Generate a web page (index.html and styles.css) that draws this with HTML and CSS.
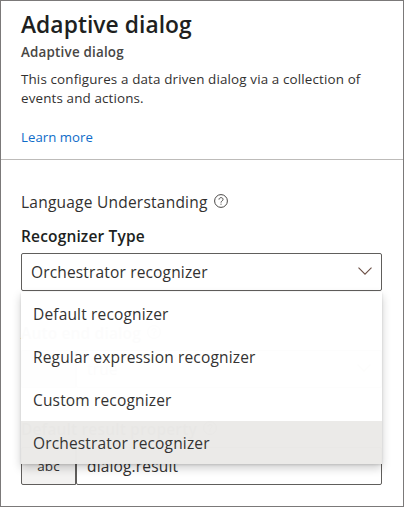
FILE: index.html
```html
<!DOCTYPE html>
<html lang="en">
<head>
<meta charset="utf-8">
<title>Adaptive dialog</title>
<link rel="stylesheet" href="styles.css">
</head>
<body>
<main class="panel">
  <header class="intro">
    <h1 class="title">Adaptive dialog</h1>
    <p class="subtitle">Adaptive dialog</p>
    <p class="description">This configures a data driven dialog via a collection of<br>events and actions.</p>
    <a class="link">Learn more</a>
  </header>
  <section class="form">
    <div class="group-label"><span>Language Understanding</span>
      <svg class="help" viewBox="0 0 14 14"><circle cx="7" cy="7" r="6.4"/><path d="M5 5.6C5 3 9 3 9 5.4C9 7 7 6.9 7 8.6M7 9.7V10.7"/></svg>
    </div>
    <div class="field-label"><span>Recognizer Type</span></div>
    <div class="select-wrap">
      <div class="select"><span>Orchestrator recognizer</span>
        <svg class="chevron" viewBox="0 0 14 8"><path d="M.5 .6L7 7.1L13.5 .6"/></svg>
      </div>
      <ul class="menu">
        <li>Default recognizer</li>
        <li>Regular expression recognizer</li>
        <li>Custom recognizer</li>
        <li class="selected">Orchestrator recognizer</li>
      </ul>
    </div>
    <div class="field-label covered"><span>Auto end dialog</span>
      <svg class="help" viewBox="0 0 14 14"><circle cx="7" cy="7" r="6.4"/><path d="M5 5.6C5 3 9 3 9 5.4C9 7 7 6.9 7 8.6M7 9.7V10.7"/></svg>
    </div>
    <div class="input-row">
      <div class="type"></div>
      <div class="value"><span>true</span>
        <svg class="chevron" viewBox="0 0 14 8"><path d="M.5 .6L7 7.1L13.5 .6"/></svg>
      </div>
    </div>
    <div class="field-label covered"><span>Default result property</span>
      <svg class="help" viewBox="0 0 14 14"><circle cx="7" cy="7" r="6.4"/><path d="M5 5.6C5 3 9 3 9 5.4C9 7 7 6.9 7 8.6M7 9.7V10.7"/></svg>
    </div>
    <div class="input-row last">
      <div class="type">abc</div>
      <div class="value"><span>dialog.result</span></div>
    </div>
  </section>
</main>
</body>
</html>
```
FILE: styles.css
```css
* { box-sizing: border-box; }
body {
  margin: 0;
  background: #fff;
  color: #323130;
  font-family: "Open Sans", "Noto Sans", sans-serif;
  font-size: 15.5px;
  letter-spacing: .16px;
}
.panel {
  width: 404px;
  height: 507px;
  border: 1px solid #7b7979;
  overflow: hidden;
}
.intro {
  height: 159px;
  padding: 9px 20px 0;
  border-bottom: 1px solid #bdbbb9;
}
.title {
  margin: 0;
  font-size: 22.8px;
  font-weight: 600;
  letter-spacing: .05px;
  line-height: 30px;
  color: #201f1e;
}
.subtitle {
  margin: 3px 0 0;
  font-size: 13.4px;
  font-weight: 600;
  letter-spacing: .2px;
  line-height: 19px;
  color: #484644;
}
.description {
  margin: 8px 0 0;
  font-size: 13.4px;
  letter-spacing: .14px;
  line-height: 19px;
  white-space: nowrap;
}
.link {
  display: block;
  margin-top: 19px;
  font-size: 13.2px;
  letter-spacing: .05px;
  line-height: 20px;
  color: #0f6cc9;
}
.form { padding: 31px 21px 0 20px; }
.group-label {
  display: flex;
  align-items: center;
  gap: 6px;
  height: 22px;
  letter-spacing: .23px;
}
.help {
  width: 14px;
  height: 14px;
  margin-top: -2px;
  fill: none;
  stroke: #494745;
  stroke-width: 1;
}
.field-label {
  display: flex;
  align-items: center;
  gap: 6px;
  height: 24px;
  margin-top: 11px;
  font-weight: 600;
  color: #201f1e;
}
.select-wrap { position: relative; margin-top: 5px; }
.select {
  display: flex;
  align-items: center;
  justify-content: space-between;
  height: 38px;
  padding: 0 9px;
  border: 1px solid #605e5c;
  border-radius: 2px;
}
.chevron {
  width: 14px;
  height: 8px;
  margin-top: -3px;
  fill: none;
  stroke: #6b4f45;
  stroke-width: 1.1;
}
.menu {
  position: absolute;
  top: 39px;
  left: 0;
  width: 361px;
  margin: 0;
  padding: 0;
  list-style: none;
  background: #fff;
  opacity: .988;
  box-shadow: 0 4px 9px rgba(0, 0, 0, .2), 0 1px 2px rgba(0, 0, 0, .12);
}
.menu li {
  display: flex;
  align-items: center;
  height: 43px;
  padding-left: 12px;
}
.menu .selected { background: #ebeae8; }
.covered { margin-top: 30px; }
.input-row {
  display: grid;
  grid-template-columns: 55px 1fr;
  height: 38px;
  margin-top: 5px;
}
.input-row + .covered { margin-top: 29px; }
.last { margin-top: 6px; }
.type {
  display: flex;
  align-items: center;
  justify-content: center;
  border: 1px solid #605e5c;
  border-radius: 2px 0 0 2px;
  background: #f3f2f1;
  font-size: 13.5px;
}
.value {
  display: flex;
  align-items: center;
  justify-content: space-between;
  padding: 0 10px;
  border: 1px solid #605e5c;
  border-radius: 2px;
}
```
